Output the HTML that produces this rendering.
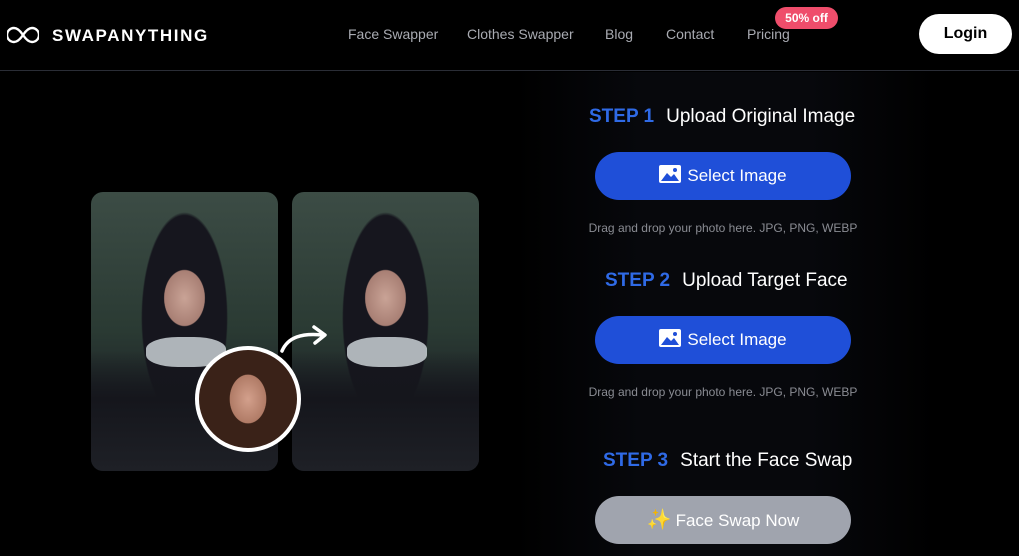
<!DOCTYPE html>
<html><head><meta charset="utf-8"><style>
*{margin:0;padding:0;box-sizing:border-box}
body{width:1019px;height:556px;background:#000;font-family:"Liberation Sans",sans-serif;color:#fff;position:relative;overflow:hidden}
.hdr{position:absolute;left:0;top:0;width:1019px;height:71px;border-bottom:1px solid #2a2d36}
.logo{position:absolute;left:52px;top:26px;font-size:17px;letter-spacing:1.6px;font-weight:bold}
.nav a{position:absolute;top:26px;font-size:14px;color:#a9abb2;text-decoration:none}
.badge{position:absolute;left:775px;top:7px;width:63px;height:22px;border-radius:11px;background:#ef4d6b;font-size:12px;font-weight:bold;text-align:center;line-height:22px}
.login{position:absolute;left:919px;top:14px;width:93px;height:40px;border-radius:20px;background:#fff;color:#000;font-weight:bold;font-size:16px;text-align:center;line-height:40px}
.glow{position:absolute;left:515px;top:72px;width:420px;height:484px;background:linear-gradient(90deg,#000,#07080c 30%,#07080c 70%,#000)}
.card{position:absolute;top:192px;width:187px;height:279px;border-radius:12px;overflow:hidden;background:radial-gradient(ellipse 40px 55px at 50% 38%,#c9a396 0,#a87f74 50%,transparent 52%),radial-gradient(ellipse 70px 170px at 50% 45%,#16161e 60%,transparent 62%),linear-gradient(180deg,#3c4c45,#2a3a33 50%,#1b1e24 80%,#111318)}
.card::after{content:"";position:absolute;left:0;bottom:0;width:100%;height:120px;background:linear-gradient(180deg,transparent,#15161c 40%,#1e2026);}
.collar{position:absolute;left:55px;top:145px;width:80px;height:30px;border-radius:40%;background:#d5dce0;z-index:1;opacity:.8}
.face{position:absolute;left:195px;top:346px;width:106px;height:106px;border-radius:50%;border:4px solid #fff;background:radial-gradient(ellipse 30px 40px at 50% 50%,#d3a08c 0,#b07b66 60%,transparent 62%),#3a2218;z-index:3}
.step{position:absolute;font-size:19px;white-space:nowrap}
.step b{color:#2f6ae6;margin-right:12px}
.btn{position:absolute;left:595px;width:256px;height:48px;border-radius:24px;background:#1f4fd8;font-size:17px;text-align:center;line-height:48px}
.btn.g{background:#a0a4ae}
.hint{position:absolute;left:573px;font-size:12px;color:#8a8c93;width:300px;text-align:center}
</style></head><body>
<div class="hdr">
<svg style="position:absolute;left:7px;top:26px" width="32" height="18" viewBox="0 0 32 18"><path d="M16 9C12 3 9 2 7 2A7 7 0 0 0 7 16C9 16 12 15 16 9C20 3 23 2 25 2A7 7 0 0 1 25 16C23 16 20 15 16 9Z" fill="none" stroke="#fff" stroke-width="2.4"/></svg>
<div class="logo">SWAPANYTHING</div>
<div class="nav"><a style="left:348px">Face Swapper</a><a style="left:467px">Clothes Swapper</a><a style="left:605px">Blog</a><a style="left:666px">Contact</a><a style="left:747px">Pricing</a></div>
<div class="badge">50% off</div>
<div class="login">Login</div>
</div>
<div class="glow"></div>
<div class="card" style="left:91px"><div class="collar"></div></div>
<div class="card" style="left:292px"><div class="collar"></div></div>
<svg style="position:absolute;left:278px;top:325px;z-index:4" width="52" height="30" viewBox="0 0 52 30"><path d="M4 26C10 12 24 8 44 10" fill="none" stroke="#fff" stroke-width="3.5" stroke-linecap="round"/><path d="M36 2L47 10L37 18" fill="none" stroke="#fff" stroke-width="3.5" stroke-linecap="round" stroke-linejoin="round"/></svg>
<div class="face"></div>
<div class="step" style="left:589px;top:106px"><b>STEP 1</b>Upload Original Image</div>
<div class="btn" style="top:152px"><svg width="22" height="18" viewBox="0 0 22 18" style="vertical-align:-2px;margin-right:6px"><rect width="22" height="18" rx="2" fill="#fff"/><path d="M2 16L8 8L12 12L15 9L20 16Z" fill="#1f4fd8"/><circle cx="16" cy="5" r="2" fill="#1f4fd8"/></svg>Select Image</div>
<div class="hint" style="top:221px">Drag and drop your photo here. JPG, PNG, WEBP</div>
<div class="step" style="left:605px;top:270px"><b>STEP 2</b>Upload Target Face</div>
<div class="btn" style="top:316px"><svg width="22" height="18" viewBox="0 0 22 18" style="vertical-align:-2px;margin-right:6px"><rect width="22" height="18" rx="2" fill="#fff"/><path d="M2 16L8 8L12 12L15 9L20 16Z" fill="#1f4fd8"/><circle cx="16" cy="5" r="2" fill="#1f4fd8"/></svg>Select Image</div>
<div class="hint" style="top:385px">Drag and drop your photo here. JPG, PNG, WEBP</div>
<div class="step" style="left:603px;top:450px"><b>STEP 3</b>Start the Face Swap</div>
<div class="btn g" style="top:496px"><span style="color:#f5b52a;font-size:20px;margin-right:4px">✨</span>Face Swap Now</div>
</body></html>
